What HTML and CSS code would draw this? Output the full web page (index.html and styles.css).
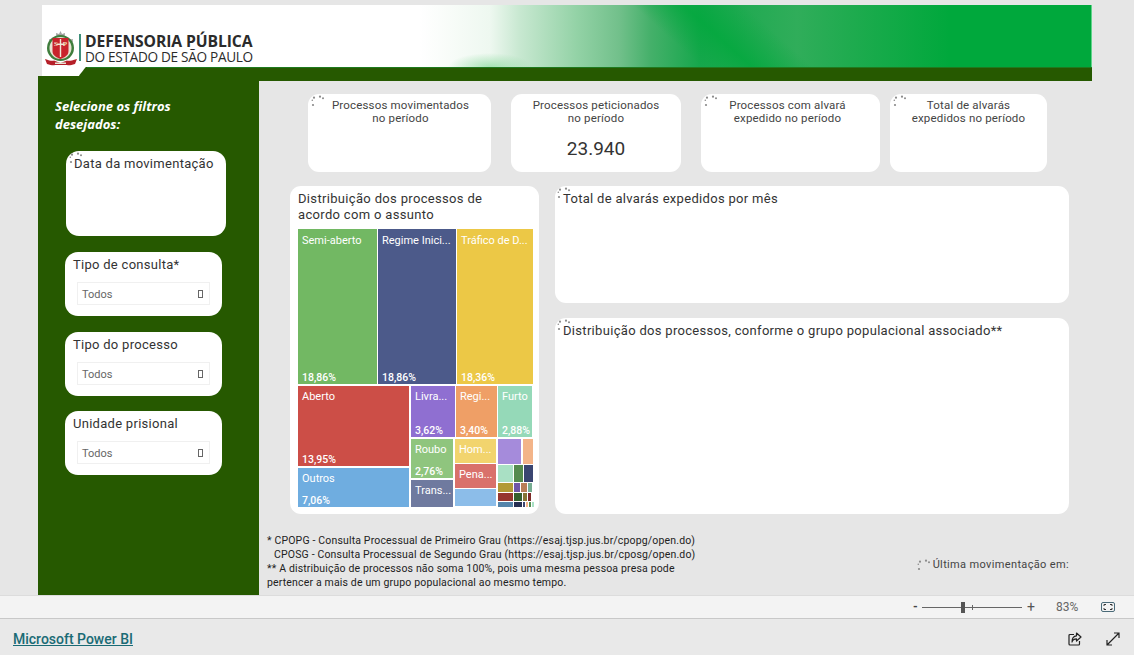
FILE: index.html
```html
<!DOCTYPE html>
<html lang="pt-BR">
<head>
<meta charset="utf-8">
<title>Defensoria Pública</title>
<link rel="stylesheet" href="styles.css">
</head>
<body>
<svg class="defs" width="0" height="0" aria-hidden="true">
  <symbol id="spin" viewBox="0 0 16 12">
    <g fill="#8a8a8a">
      <circle cx="2" cy="10" r="1.100"/><circle cx="1.300" cy="5.200" r=".8"/><circle cx="3" cy="2.700" r="1.100"/>
      <circle cx="9" cy="1.700" r="1.100"/><circle cx="12" cy="3.300" r="1"/>
    </g>
  </symbol>
</svg>

<div class="report">
  <header class="banner">
    <div class="banner-top">
      <div class="logo">
        <svg class="crest" width="32" height="36" viewBox="0 0 32 36">
          <path d="M15.500 0l1.500 3 3-1-.5 5H11.500L11 2l3 1z" fill="#a3a3a3"/>
          <path d="M4 8h4v3H4zM24 8h4v3h-4z" fill="#b9b9b9"/>
          <ellipse cx="15.500" cy="17" rx="13.500" ry="13" fill="#3f7d3c"/>
          <ellipse cx="15.500" cy="17" rx="11" ry="11" fill="#e8e3d4"/>
          <path d="M7.500 7h16v13c0 5-4.500 6.500-8 8-3.500-1.500-8-3-8-8z" fill="#c8232c"/>
          <path d="M14.800 8h1.400v18h-1.400zM12 12.500h7v1.500h-7z" fill="#efe9d8"/>
          <text x="11" y="15" class="crest-t">S</text><text x="20" y="15" class="crest-t">P</text>
          <path d="M0 28c5 2 8 2 9 1.500l6.500 2.500 6.500-2.500c1 .5 4 .5 10-1.500l-2 5c-4 1.500-7 1.500-8 1H10c-1 .5-4 .5-8-1z" fill="#b51f28"/>
          <path d="M10 31.500h11v1.500H10z" fill="#e8e3d4"/>
        </svg>
        <span class="logo-rule"></span>
        <div class="logo-text">
          <div class="logo-a">DEFENSORIA PÚBLICA</div>
          <div class="logo-b">DO ESTADO DE SÃO PAULO</div>
        </div>
      </div>
    </div>
    <div class="banner-band"></div>
  </header>

  <div class="workspace">
    <aside class="filters">
      <h2 class="filters-title">Selecione os filtros desejados:</h2>
      <section class="filter filter-date">
        <svg class="spin spin-date"><use href="#spin"/></svg>
        <div class="filter-label date-label">Data da movimentação</div>
      </section>
      <section class="filter">
        <div class="filter-label">Tipo de consulta*</div>
        <div class="select"><span>Todos</span><i class="tofu"></i></div>
      </section>
      <section class="filter">
        <div class="filter-label">Tipo do processo</div>
        <div class="select"><span>Todos</span><i class="tofu"></i></div>
      </section>
      <section class="filter filter-last">
        <div class="filter-label">Unidade prisional</div>
        <div class="select"><span>Todos</span><i class="tofu"></i></div>
      </section>
    </aside>

    <main class="content">
      <div class="kpis">
        <div class="kpi kpi-1"><svg class="spin"><use href="#spin"/></svg><p>Processos movimentados<br>no período</p></div>
        <div class="kpi kpi-2"><p>Processos peticionados<br>no período</p><div class="kpi-value">23.940</div></div>
        <div class="kpi kpi-3"><svg class="spin"><use href="#spin"/></svg><p>Processos com alvará<br>expedido no período</p></div>
        <div class="kpi kpi-4"><svg class="spin"><use href="#spin"/></svg><p>Total de alvarás<br>expedidos no período</p></div>
      </div>

      <div class="charts">
        <section class="card tree-card">
          <h3 class="tree-title">Distribuição dos processos de<br>acordo com o assunto</h3>
          <div class="tree">
            <div class="t-row t-top">
              <div class="cell w79 c-semi"><span>Semi-aberto</span><b>18,86%</b></div>
              <div class="cell w78 c-regime"><span>Regime Inici...</span><b>18,86%</b></div>
              <div class="cell w76 c-traf"><span>Tráfico de D...</span><b>18,36%</b></div>
            </div>
            <div class="t-row t-bottom">
              <div class="t-col w111">
                <div class="cell h80 c-aberto"><span>Aberto</span><b>13,95%</b></div>
                <div class="cell h39 c-outros"><span>Outros</span><b>7,06%</b></div>
              </div>
              <div class="t-col w121">
                <div class="t-row h51">
                  <div class="cell w44 c-livra"><span>Livra...</span><b>3,62%</b></div>
                  <div class="cell w41 c-regi"><span>Regi...</span><b>3,40%</b></div>
                  <div class="cell w34 c-furto"><span>Furto</span><b>2,88%</b></div>
                </div>
                <div class="t-row h68 gap2">
                  <div class="t-col w42">
                    <div class="cell h39 c-roubo"><span>Roubo</span><b>2,76%</b></div>
                    <div class="cell h27 c-trans"><span>Trans...</span></div>
                  </div>
                  <div class="t-col w41 gap1">
                    <div class="cell h24 c-hom"><span>Hom...</span></div>
                    <div class="cell h24 c-pena"><span>Pena...</span></div>
                    <div class="cell h17 c-azul"></div>
                  </div>
                  <div class="t-col w35 gap1">
                    <div class="t-row gap2 h25">
                      <div class="cell w23 c-s1"></div><div class="cell w10 c-s2"></div>
                    </div>
                    <div class="t-row gap1 h17">
                      <div class="cell w15 c-s3"></div><div class="cell w9 c-s4"></div><div class="cell w9 c-s5"></div>
                    </div>
                    <div class="t-row gap1 h9">
                      <div class="cell w15 c-s6"></div><div class="cell w6 c-s7"></div><div class="cell w6 c-s8"></div><div class="cell w4 c-s9"></div>
                    </div>
                    <div class="t-row gap1 h8">
                      <div class="cell w15 c-s10"></div><div class="cell w8 c-s11"></div><div class="cell w4 c-s12"></div><div class="cell w3 c-s13"></div>
                    </div>
                    <div class="t-row gap1 h5">
                      <div class="cell w15 c-s14"></div><div class="cell w8 c-s15"></div><div class="cell w2 c-s5"></div><div class="cell w2 c-s2"></div><div class="cell w2 c-s4"></div><div class="cell w2 c-s3"></div>
                    </div>
                  </div>
                </div>
              </div>
            </div>
          </div>
        </section>
        <div class="chart-col">
          <section class="card chart chart-a"><svg class="spin spin-chart"><use href="#spin"/></svg><h3>Total de alvarás expedidos por mês</h3></section>
          <section class="card chart chart-b"><svg class="spin spin-chart"><use href="#spin"/></svg><h3>Distribuição dos processos, conforme o grupo populacional associado**</h3></section>
        </div>
      </div>

      <div class="notes">
        <p class="note-text">* CPOPG - Consulta Processual de Primeiro Grau (https://esaj.tjsp.jus.br/cpopg/open.do)<br>
        <span class="indent">CPOSG - Consulta Processual de Segundo Grau (https://esaj.tjsp.jus.br/cposg/open.do)</span><br>
        ** A distribuição de processos não soma 100%, pois uma mesma pessoa presa pode<br>
        pertencer a mais de um grupo populacional ao mesmo tempo.</p>
        <div class="updated"><svg class="spin spin-up"><use href="#spin"/></svg><span>Última movimentação em:</span></div>
      </div>
    </main>
  </div>
</div>

<div class="zoombar">
  <span class="zb-minus">-</span>
  <div class="slider"><i class="thumb"></i><i class="tick"></i></div>
  <span class="zb-plus">+</span>
  <span class="zb-pct">83%</span>
  <svg class="zb-fit" width="14" height="10" viewBox="0 0 14 10"><rect x=".5" y=".5" width="13" height="9" rx="1.500" fill="none" stroke="#4a6a78"/><path d="M3 4V2.500h2M9 2.500h2V4M11 6v1.500H9M5 7.500H3V6" fill="none" stroke="#333"/></svg>
</div>

<footer class="footer">
  <a class="brand" href="#">Microsoft Power BI</a>
  <div class="footer-icons">
    <svg width="14" height="14" viewBox="0 0 14 14"><path d="M6 2.500H2a1 1 0 0 0-1 1V12a1 1 0 0 0 1 1h8.500a1 1 0 0 0 1-1V9" fill="none" stroke="#222" stroke-width="1.200"/><path d="M8.500 1l4.500 4-4.500 4V6.800C6 6.800 4.500 8 4 10c0-4 2-6 4.500-6.200z" fill="none" stroke="#222" stroke-width="1.200" stroke-linejoin="round"/></svg>
    <svg width="14" height="14" viewBox="0 0 14 14"><path d="M1 13L13 1M8 1h5v5M1 8v5h5" fill="none" stroke="#222" stroke-width="1.200"/></svg>
  </div>
</footer>
</body>
</html>
```
FILE: styles.css
```css
* { box-sizing: border-box; }
html, body { margin: 0; height: 655px; overflow: hidden; }
body { background: #e6e6e6; font-family: "Roboto", "Liberation Sans", sans-serif; color: #333; }
.defs { position: absolute; }
h2, h3, p { margin: 0; font-weight: 400; }

.report { height: 595px; padding-top: 5px; }
.banner { width: 1050px; height: 76px; margin-left: 42px; display: flex; flex-direction: column; }
.banner-top {
  height: 62px;
  border-right: 1px solid #5fd48a;
  background:
    radial-gradient(ellipse 42px 14px at 448px 100%, rgba(130,215,150,.65), rgba(130,215,150,0)),
    linear-gradient(42deg, rgba(0,168,60,0) 59%, rgba(0,168,60,.75) 63.500%, rgba(0,168,60,0) 69%),
    linear-gradient(90deg, #fff 0, #fff 36%, #eef8f0 42.700%, #c8e8d1 45.500%, #93d2a6 51%, #72c08b 55%, #45b06a 58%, #16a74c 62.700%, #30ad5a 72%, #1fab4f 77%, #00a83c 86.500%, #00a83c 100%);
}
.banner-band {
  height: 14px;
  background:
    linear-gradient(#1f7a1f, #1f7a1f) 45px 0 / 100% 1px no-repeat,
    linear-gradient(128deg, #fff 34px, #265900 35px);
}
.logo { display: flex; align-items: flex-start; padding: 26px 0 0 3px; height: 71px; width: 235px; position: relative; z-index: 2; }
.crest { flex: none; }
.logo-rule { width: 2px; height: 27px; background: #3f8f7a; margin: 3px 0 0 2px; flex: none; }
.logo-text { margin: 2px 0 0 4px; color: #2b2b2b; font-family: "Open Sans", sans-serif; white-space: nowrap; }
.logo-a { font-size: 15.700px; font-weight: 700; line-height: 17px; letter-spacing: -.1px; }
.logo-b { font-size: 13.600px; line-height: 14px; letter-spacing: -.3px; }
.crest-t { font: 700 7px "Liberation Serif", serif; fill: #f3e9c8; text-anchor: middle; }

.workspace { display: flex; margin-top: -5px; height: 519px; }
.filters { width: 221px; margin-left: 38px; background: #265900; padding: 21px 0 0 27px; position: relative; z-index: 1; flex: none; }
.filters-title { font: italic 700 13px/18px "Open Sans", sans-serif; color: #fff; width: 140px; margin: 0 0 18px -10px; }
.filter { width: 157px; height: 64px; background: #fff; border-radius: 13px; padding: 4px 8px 0; margin-bottom: 16px; position: relative; }
.filter-last { margin-top: -1px; }
.filter-date { width: 160px; height: 85px; margin: 0 0 16px 1px; }
.filter-label { font-size: 13px; line-height: 18px; letter-spacing: .28px; color: #333; }
.select { height: 23px; margin: 8px 4px 0; border: 1px solid #f0f0f0; padding: 1px 6px 0 4px; display: flex; align-items: center; justify-content: space-between; font-size: 11px; color: #666; }
.tofu { width: 5px; height: 8px; border: 1px solid #666; }

.spin { position: absolute; width: 16px; height: 12px; left: 3px; top: 1px; }
.content { flex: 1; padding: 13px 0 0 8px; margin-top: 5px; }
.kpis { display: flex; margin-left: 41px; height: 78px; }
.kpi { height: 78px; background: #fff; border-radius: 11px; position: relative; text-align: center; padding-top: 5px; font-size: 11.500px; line-height: 13px; letter-spacing: .17px; color: #444; }
.kpi-1 { width: 183px; margin-right: 20px; padding-left: 2px; }
.kpi-2 { width: 170px; margin-right: 20px; }
.kpi-3 { width: 179px; margin-right: 10px; padding-right: 6px; }
.kpi-4 { width: 157px; }
.kpi-value { font-size: 19px; line-height: 24px; margin-top: 12px; color: #333; letter-spacing: 0; }

.charts { display: flex; gap: 16px; margin: 14px 0 0 23px; height: 328px; }
.card { background: #fff; border-radius: 11px; position: relative; }
.tree-card { width: 249px; padding: 5px 6px 0 8px; }
.tree-title { font-size: 13px; line-height: 16px; letter-spacing: .33px; color: #333; height: 38px; }
.tree { display: flex; flex-direction: column; gap: 2px; }
.t-row { display: flex; gap: 1px; }
.t-col { display: flex; flex-direction: column; gap: 2px; flex: none; }
.t-top { height: 155px; }
.t-bottom { height: 121px; gap: 2px; }
.gap1 { gap: 1px; } .gap2 { gap: 2px; }
.cell { display: flex; flex-direction: column; justify-content: space-between; flex: none; color: #fff; font-size: 11px; line-height: 13px; padding: 5px 0 0 4px; overflow: hidden; white-space: nowrap; }
.t-bottom .cell { padding-top: 4px; }
.cell b { font-weight: 500; font-size: 10.500px; }
.w111 { width: 111px; } .w121 { width: 121px; }
.w79 { width: 79px; } .w78 { width: 78px; } .w76 { width: 76px; }
.w44 { width: 44px; } .w42 { width: 42px; } .w41 { width: 41px; } .w35 { width: 35px; } .w34 { width: 34px; }
.w23 { width: 23px; } .w15 { width: 15px; } .w10 { width: 10px; } .w9 { width: 9px; } .w8 { width: 8px; } .w6 { width: 6px; } .w4 { width: 4px; } .w3 { width: 3px; } .w2 { width: 2px; }
.h80 { height: 80px; } .h68 { height: 68px; } .h51 { height: 51px; } .h39 { height: 39px; } .h27 { height: 27px; } .h25 { height: 25px; } .h24 { height: 24px; } .h17 { height: 17px; } .h9 { height: 9px; } .h8 { height: 8px; } .h5 { height: 5px; }
.t-bottom .t-row > .cell.w23, .t-bottom .t-row > .cell.w15, .t-bottom .t-row > .cell.w10, .t-bottom .t-row > .cell.w9, .t-bottom .t-row > .cell.w8, .t-bottom .t-row > .cell.w6, .t-bottom .t-row > .cell.w4, .t-bottom .t-row > .cell.w3, .t-bottom .t-row > .cell.w2 { padding: 0; }
.c-semi { background: #72b863; } .c-regime { background: #4c5a8a; } .c-traf { background: #ecc846; }
.c-aberto { background: #cc4e47; } .c-outros { background: #6fade0; } .c-livra { background: #8f6fd1; }
.c-regi { background: #ef9f66; } .c-furto { background: #95d9b8; } .c-roubo { background: #8fc57e; }
.c-trans { background: #6f7a9f; } .c-hom { background: #f2d46e; } .c-pena { background: #d9716b; }
.c-azul { background: #8cbde9; } .c-s1 { background: #a58bdb; } .c-s2 { background: #f3b489; }
.c-s3 { background: #a9e0c4; } .c-s4 { background: #548a4e; } .c-s5 { background: #3a4571; }
.c-s6 { background: #b29a36; } .c-s7 { background: #7057a7; } .c-s8 { background: #b97e57; } .c-s9 { background: #76ad92; }
.c-s10 { background: #96362f; } .c-s11 { background: #35602f; } .c-s12 { background: #857533; } .c-s13 { background: #7d2a27; }
.c-s14 { background: #5585ab; } .c-s15 { background: #262f52; }

.chart-col { display: flex; flex-direction: column; gap: 15px; width: 514px; }
.chart h3 { font-size: 13px; line-height: 16px; letter-spacing: .31px; color: #333; padding: 5px 0 0 8px; }
.chart-a { height: 117px; }
.chart-b { height: 196px; }
.spin-chart { left: 2px; top: 1px; }

.notes { display: flex; justify-content: space-between; align-items: flex-start; margin: 20px 65px 0 0; }
.note-text { font-size: 10.500px; line-height: 14px; color: #222; letter-spacing: .16px; }
.indent { margin-left: 7px; }
.updated { position: relative; font-size: 11px; line-height: 14px; color: #444; letter-spacing: .35px; margin-top: 24px; padding-left: 16px; }
.spin-up { left: 0; top: 1px; }

.zoombar { height: 24px; margin-top: 0; background: #f3f3f3; border-top: 1px solid #dcdcdc; border-bottom: 1px solid #c8c8c8; display: flex; align-items: center; padding-left: 913px; color: #555; font-size: 12px; }
.zb-minus { width: 9px; font-weight: 700; color: #444; }
.slider { width: 100px; height: 1px; background: #666; position: relative; }
.thumb { position: absolute; left: 39px; top: -5px; width: 4px; height: 11px; background: #555; }
.tick { position: absolute; left: 50px; top: -2px; width: 1px; height: 5px; background: #666; }
.zb-plus { margin-left: 5px; width: 10px; font-size: 14px; }
.zb-pct { margin-left: 19px; width: 26px; color: #666; }
.zb-fit { margin-left: 19px; }
.footer { height: 36px; display: flex; align-items: center; justify-content: space-between; padding: 4px 14px 0 13px; background: #e9e9e9; }
.brand { color: #1a6b75; font: 500 14px "Roboto", sans-serif; text-decoration: underline; }
.footer-icons { display: flex; gap: 24px; }
```
